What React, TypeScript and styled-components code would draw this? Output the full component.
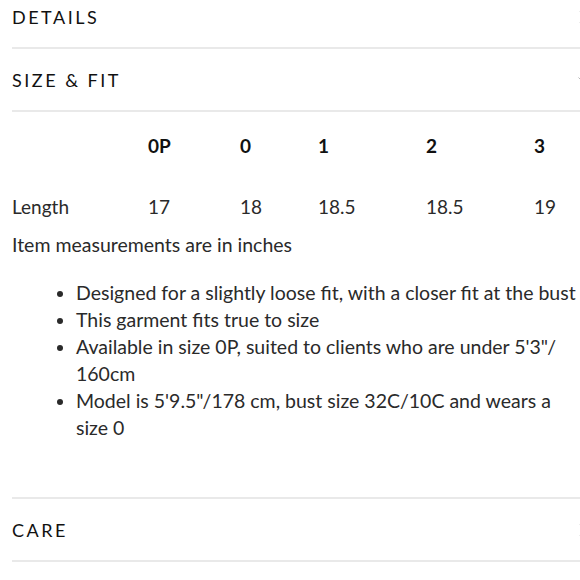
import React from "react";
import styled, { createGlobalStyle } from "styled-components";

const Global = createGlobalStyle`
  html, body { margin: 0; padding: 0; background: #fff; overflow: hidden; }
  body { font-family: Lato, "Noto Sans", sans-serif; color: #222; }
`;

const Page = styled.div`
  box-sizing: border-box;
  width: 590px;
  padding-left: 12px;
  margin-top: -14px;
`;

const Section = styled.section`
  border-bottom: 2px solid #e9e9e9;
`;

const Header = styled.div`
  height: 61px;
  display: flex;
  align-items: center;
  justify-content: space-between;
`;

const Title = styled.h2`
  margin: 0;
  font-size: 18px;
  font-weight: 400;
  letter-spacing: 2.5px;
  color: #111;
  text-transform: uppercase;
`;

const Chevron = styled.svg`
  width: 12px;
  height: 12px;
  flex: none;
`;

const Panel = styled.div`
  padding: 22px 0 56px;
  border-top: 2px solid #e9e9e9;
`;

const Table = styled.div`
  display: grid;
  grid-template-columns: 136px 92px 78px 108px 108px 1fr;
  row-gap: 37px;
  font-size: 19px;
  line-height: 24px;
`;

const HeadCell = styled.div`
  font-weight: 700;
  color: #111;
`;

const Cell = styled.div`
  color: #2a2a2a;
`;

const Note = styled.p`
  margin: 14px 0 0;
  font-size: 19.5px;
  line-height: 24px;
  color: #2a2a2a;
`;

const List = styled.ul`
  margin: 22px 0 0;
  padding-left: 64px;
  font-size: 19.5px;
  line-height: 27px;
  color: #2a2a2a;
  white-space: nowrap;
`;

const Item = styled.li``;

function ChevronIcon({ open }: { open?: boolean }) {
  return (
    <Chevron viewBox="0 0 12 12" fill="none" stroke="#b5b5b5" strokeWidth={1}>
      {open ? <path d="M0.5 3.5l5.5 5.5 5.5-5.5" /> : <path d="M2 0.5l5.5 5.5-5.5 5.5" />}
    </Chevron>
  );
}

const sizes = ["0P", "0", "1", "2", "3"];
const lengths = ["17", "18", "18.5", "18.5", "19"];

export default function App() {
  return (
    <>
      <Global />
      <Page>
        <Section>
          <Header>
            <Title>Details</Title>
            <ChevronIcon />
          </Header>
        </Section>
        <Section>
          <Header>
            <Title>Size &amp; Fit</Title>
            <ChevronIcon open />
          </Header>
          <Panel>
            <Table>
              <div />
              {sizes.map((s) => (
                <HeadCell key={s}>{s}</HeadCell>
              ))}
              <Cell>Length</Cell>
              {lengths.map((l, i) => (
                <Cell key={i}>{l}</Cell>
              ))}
            </Table>
            <Note>Item measurements are in inches</Note>
            <List>
              <Item>Designed for a slightly loose fit, with a closer fit at the bust</Item>
              <Item>This garment fits true to size</Item>
              <Item>
                Available in size 0P, suited to clients who are under 5'3"/
                <br />
                160cm
              </Item>
              <Item>
                Model is 5'9.5"/178 cm, bust size 32C/10C and wears a
                <br />
                size 0
              </Item>
            </List>
          </Panel>
        </Section>
        <Section>
          <Header>
            <Title>Care</Title>
            <ChevronIcon />
          </Header>
        </Section>
      </Page>
    </>
  );
}
